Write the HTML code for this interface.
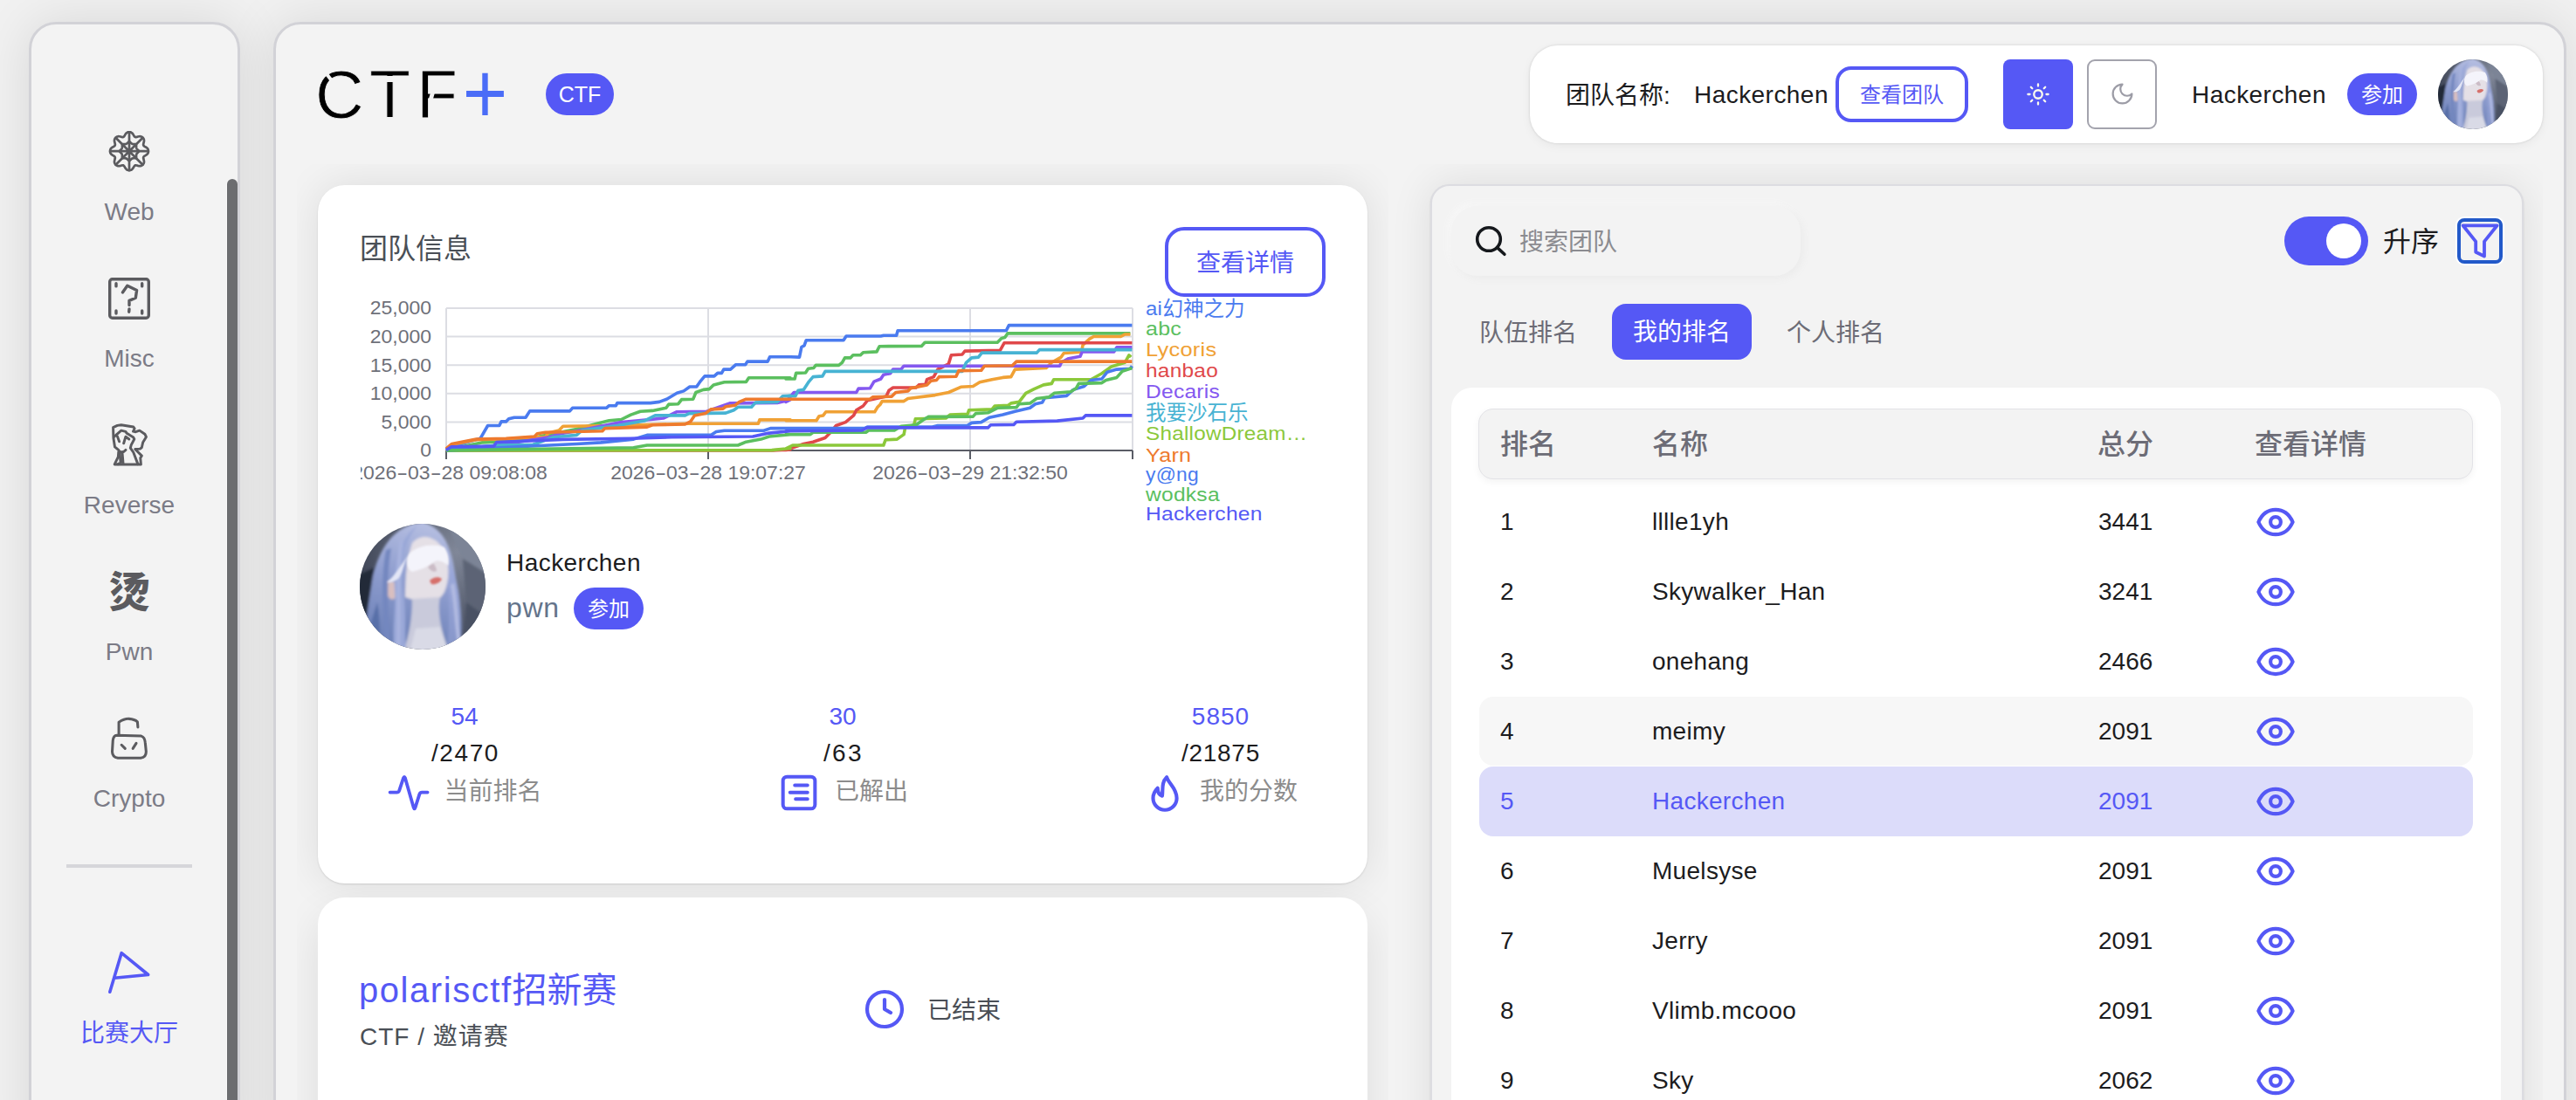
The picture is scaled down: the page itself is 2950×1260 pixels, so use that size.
<!DOCTYPE html>
<html lang="zh-CN">
<head>
<meta charset="utf-8">
<title>CTF+</title>
<style>
*{box-sizing:border-box;margin:0;padding:0}
html{background:#f1f1f1}
body{width:2950px;height:1260px;background:#f1f1f1}
#root{position:relative;width:2950px;height:1260px;overflow:hidden;background:#f1f1f1}
body{position:relative;font-family:"Liberation Sans","Noto Sans CJK SC",sans-serif;color:#1c1c1e;font-size:28px;line-height:1}
.abs{position:absolute}
.t{position:absolute;white-space:nowrap;line-height:1}
.c{transform:translateX(-50%)}
.pri{color:#5558f5}
svg{position:absolute;overflow:visible}
#side{position:absolute;left:33px;top:25px;width:242px;height:1300px;background:#f3f3f3;border:3px solid #d2d2d7;border-radius:31px}
.psh{position:absolute;border-radius:31px;box-shadow:0 0 60px rgba(0,0,0,.105)}
#sbar{position:absolute;left:260px;top:205px;width:12px;height:1100px;background:#6c6d70;border-radius:6px 6px 0 0;box-shadow:-1px 0 0 #fafafa}
.slab{position:absolute;left:34px;width:228px;text-align:center;font-size:28px;color:#7b7b86;line-height:32px;margin-top:1px}
#main{position:absolute;left:313px;top:25px;width:2626px;height:1300px;background:#f3f3f3;border:3px solid #d2d2d7;border-radius:31px}
.clipc{position:absolute;top:188px;height:1072px;overflow:hidden}
.clipc>div{position:absolute;top:-188px;width:2950px;height:1260px}
.card{position:absolute;background:#fff;border-radius:31px;box-shadow:0 1px 2px rgba(0,0,0,.12),0 0 48px rgba(0,0,0,.095)}
.pill{position:absolute;background:#5558f5;color:#fff;border-radius:24px;text-align:center;font-size:24px;line-height:50px;height:48px;width:80px}
.sico{stroke:#5b5b5f;fill:none;stroke-linecap:round;stroke-linejoin:round}
</style>
</head>
<body>
<div id="root">
<svg width="0" height="0" style="left:0;top:0"><defs>
<radialGradient id="avbg" cx="0.78" cy="0.22" r="1.050"><stop offset="0" stop-color="#818899"/><stop offset="0.45" stop-color="#5a6172"/><stop offset="1" stop-color="#2b3142"/></radialGradient>
<linearGradient id="avhair" x1="0.5" y1="0" x2="0.3" y2="1"><stop offset="0" stop-color="#b4bde1"/><stop offset="0.45" stop-color="#8c9bcd"/><stop offset="1" stop-color="#657bb2"/></linearGradient>
<linearGradient id="avhair2" x1="0" y1="0" x2="0" y2="1"><stop offset="0" stop-color="#9daadb"/><stop offset="1" stop-color="#8494c8"/></linearGradient>
<filter id="avb" x="-20%" y="-20%" width="140%" height="140%"><feGaussianBlur stdDeviation="1.800"/></filter>
<filter id="avb2" x="-20%" y="-20%" width="140%" height="140%"><feGaussianBlur stdDeviation="0.900"/></filter>
<clipPath id="avc"><circle cx="72" cy="72" r="72"/></clipPath>
</defs></svg>
<!-- SIDEBAR -->
<div class="psh" style="left:33px;top:25px;width:242px;height:1300px"></div>
<div class="psh" style="left:313px;top:25px;width:2625px;height:1300px"></div>
<div id="side"></div>
<div id="sbar"></div>
<!-- web icon -->
<svg class="sico" style="left:124px;top:149px" width="48" height="48" viewBox="0 0 48 48" stroke-width="2.700">
<g transform="translate(24,24.200)">
<path d="M0.00,-21.90L1.07,-21.84L2.12,-21.55L3.11,-20.93L3.98,-19.99L4.72,-18.85L5.37,-17.71L6.01,-16.80L6.74,-16.26L7.63,-16.13L8.73,-16.32L9.99,-16.66L11.32,-16.95L12.61,-17.00L13.74,-16.74L14.69,-16.20L15.49,-15.49L16.20,-14.69L16.74,-13.74L17.00,-12.61L16.95,-11.32L16.66,-9.99L16.32,-8.73L16.13,-7.63L16.26,-6.74L16.80,-6.01L17.71,-5.37L18.85,-4.72L19.99,-3.98L20.93,-3.11L21.55,-2.12L21.84,-1.07L21.90,-0.00L21.84,1.07L21.55,2.12L20.93,3.11L19.99,3.98L18.85,4.72L17.71,5.37L16.80,6.01L16.26,6.74L16.13,7.63L16.32,8.73L16.66,9.99L16.95,11.32L17.00,12.61L16.74,13.74L16.20,14.69L15.49,15.49L14.69,16.20L13.74,16.74L12.61,17.00L11.32,16.95L9.99,16.66L8.73,16.32L7.63,16.13L6.74,16.26L6.01,16.80L5.37,17.71L4.72,18.85L3.98,19.99L3.11,20.93L2.12,21.55L1.07,21.84L0.00,21.90L-1.07,21.84L-2.12,21.55L-3.11,20.93L-3.98,19.99L-4.72,18.85L-5.37,17.71L-6.01,16.80L-6.74,16.26L-7.63,16.13L-8.73,16.32L-9.99,16.66L-11.32,16.95L-12.61,17.00L-13.74,16.74L-14.69,16.20L-15.49,15.49L-16.20,14.69L-16.74,13.74L-17.00,12.61L-16.95,11.32L-16.66,9.99L-16.32,8.73L-16.13,7.63L-16.26,6.74L-16.80,6.01L-17.71,5.37L-18.85,4.72L-19.99,3.98L-20.93,3.11L-21.55,2.12L-21.84,1.07L-21.90,0.00L-21.84,-1.07L-21.55,-2.12L-20.93,-3.11L-19.99,-3.98L-18.85,-4.72L-17.71,-5.37L-16.80,-6.01L-16.26,-6.74L-16.13,-7.63L-16.32,-8.73L-16.66,-9.99L-16.95,-11.32L-17.00,-12.61L-16.74,-13.74L-16.20,-14.69L-15.49,-15.49L-14.69,-16.20L-13.74,-16.74L-12.61,-17.00L-11.32,-16.95L-9.99,-16.66L-8.73,-16.32L-7.63,-16.13L-6.74,-16.26L-6.01,-16.80L-5.37,-17.71L-4.72,-18.85L-3.98,-19.99L-3.11,-20.93L-2.12,-21.55L-1.07,-21.84Z"/>
<path d="M0.00,-21.90L-0.00,21.90M15.49,-15.49L-15.49,15.49M21.90,-0.00L-21.90,0.00M15.49,15.49L-15.49,-15.49"/>
<path d="M0.00,-11.20L0.53,-10.82L1.02,-10.38L1.47,-9.94L1.89,-9.51L2.29,-9.12L2.67,-8.79L3.05,-8.52L3.44,-8.31L3.87,-8.18L4.33,-8.10L4.83,-8.07L5.39,-8.06L5.99,-8.07L6.62,-8.07L7.28,-8.03L7.92,-7.92L8.03,-7.28L8.07,-6.62L8.07,-5.99L8.06,-5.39L8.07,-4.83L8.10,-4.33L8.18,-3.87L8.31,-3.44L8.52,-3.05L8.79,-2.67L9.12,-2.29L9.51,-1.89L9.94,-1.47L10.38,-1.02L10.82,-0.53L11.20,-0.00L10.82,0.53L10.38,1.02L9.94,1.47L9.51,1.89L9.12,2.29L8.79,2.67L8.52,3.05L8.31,3.44L8.18,3.87L8.10,4.33L8.07,4.83L8.06,5.39L8.07,5.99L8.07,6.62L8.03,7.28L7.92,7.92L7.28,8.03L6.62,8.07L5.99,8.07L5.39,8.06L4.83,8.07L4.33,8.10L3.87,8.18L3.44,8.31L3.05,8.52L2.67,8.79L2.29,9.12L1.89,9.51L1.47,9.94L1.02,10.38L0.53,10.82L0.00,11.20L-0.53,10.82L-1.02,10.38L-1.47,9.94L-1.89,9.51L-2.29,9.12L-2.67,8.79L-3.05,8.52L-3.44,8.31L-3.87,8.18L-4.33,8.10L-4.83,8.07L-5.39,8.06L-5.99,8.07L-6.62,8.07L-7.28,8.03L-7.92,7.92L-8.03,7.28L-8.07,6.62L-8.07,5.99L-8.06,5.39L-8.07,4.83L-8.10,4.33L-8.18,3.87L-8.31,3.44L-8.52,3.05L-8.79,2.67L-9.12,2.29L-9.51,1.89L-9.94,1.47L-10.38,1.02L-10.82,0.53L-11.20,0.00L-10.82,-0.53L-10.38,-1.02L-9.94,-1.47L-9.51,-1.89L-9.12,-2.29L-8.79,-2.67L-8.52,-3.05L-8.31,-3.44L-8.18,-3.87L-8.10,-4.33L-8.07,-4.83L-8.06,-5.39L-8.07,-5.99L-8.07,-6.62L-8.03,-7.28L-7.92,-7.92L-7.28,-8.03L-6.62,-8.07L-5.99,-8.07L-5.39,-8.06L-4.83,-8.07L-4.33,-8.10L-3.87,-8.18L-3.44,-8.31L-3.05,-8.52L-2.67,-8.79L-2.29,-9.12L-1.89,-9.51L-1.47,-9.94L-1.02,-10.38L-0.53,-10.82Z"/>
</g></svg>
<div class="slab" style="top:226px">Web</div>
<!-- misc icon -->
<svg class="sico" style="left:124px;top:318px" width="48" height="48" viewBox="0 0 48 48" stroke-width="3.4">
<rect x="1.7" y="1.700" width="44.6" height="44.6" rx="3"/>
<path d="M16.4,16.9L21.8,9.200L32.6,14.6L31.3,23.2L24,26.4V31.5M24,36L23.700,39.200M9,6.700V9.900M38.700,6.700V9.900M9,37.900V41M38.700,37.900V41"/>
</svg>
<div class="slab" style="top:394px">Misc</div>
<!-- reverse icon -->
<svg class="sico" style="left:107px;top:475px" width="80" height="70" viewBox="0 0 1257 1100" stroke-width="46">
<path d="M360,420L355,230L430,195L500,185L720,220L740,250L715,300L760,310L830,285L925,350L950,400L890,500L870,590L840,615L750,620L870,740L845,780L855,895L380,895L445,760L455,640L385,580Z"/>
<path d="M370,400L500,285L580,305L600,335L720,410L735,440L680,545L665,600L720,680L800,890"/>
<path d="M430,390L465,485M545,515L580,395L640,440M580,635C540,680 500,680 470,660M520,700L535,880M470,690L490,860L440,890"/>
</svg>
<div class="slab" style="top:562px">Reverse</div>
<!-- pwn icon -->
<div class="t" style="left:124px;top:655px;width:48px;text-align:center;font-size:48px;font-weight:900;color:#5b5b5f;font-family:'Liberation Sans','Noto Sans CJK SC',sans-serif">烫</div>
<div class="slab" style="top:730px">Pwn</div>
<!-- crypto icon -->
<svg class="sico" style="left:107px;top:810px" width="80" height="70" viewBox="0 0 1257 1100" stroke-width="48">
<path d="M420,507L860,520Q925,540 932,640L948,800Q950,900 850,915L440,915Q340,900 338,800L350,600Q360,512 420,507Z"/>
<path d="M457,495V270Q560,205 640,210Q740,215 792,265L800,360"/>
<path d="M505,680L570,745M770,650L710,745"/>
</svg>
<div class="slab" style="top:898px">Crypto</div>
<div class="abs" style="left:76px;top:990px;width:144px;height:4px;background:#d6d6da"></div>
<!-- flag -->
<svg style="left:87px;top:1070px" width="120" height="140" viewBox="0 0 120 140" fill="none" stroke="#5558f5" stroke-width="3.6" stroke-linecap="round" stroke-linejoin="round">
<path d="M38.800,66.200L52.200,21.600L82.700,46.500L43.900,50.300"/></svg>
<div class="slab" style="top:1167px;color:#5558f5">比赛大厅</div>
<!-- MAIN -->
<div id="main"></div>
<!-- logo -->
<div class="t" id="logoC" style="left:361px;top:70px;font-size:77px;color:#000;-webkit-text-stroke:.8px #f3f3f3">C</div>
<div class="t" id="logoT" style="left:423px;top:70px;font-size:77px;color:#000;-webkit-text-stroke:.8px #f3f3f3">T</div>
<div class="t" id="logoF" style="left:477px;top:70px;font-size:77px;color:#000;-webkit-text-stroke:.8px #f3f3f3">F</div>
<div class="t" id="logoP" style="left:531px;top:65px;font-size:84px;color:#4a6cf7;transform:scale(1.05,1.17);transform-origin:50% 50%">+</div>
<div class="abs" style="left:441px;top:87.300px;width:11px;height:7.200px;background:#f3f3f3"></div>
<div class="abs" style="left:492.400px;top:106.300px;width:5px;height:7.200px;background:#f3f3f3;transform:skewX(-16deg)"></div>
<div class="abs" style="left:368.500px;top:86px;width:15px;height:4px;background:#f3f3f3;transform:rotate(52deg)"></div>
<div class="pill" style="left:625px;top:84px;width:78px;height:48px;line-height:48px;font-size:25px">CTF</div>
<!-- header pill -->
<div class="abs" style="left:1752px;top:52px;width:1160px;height:112px;background:#fff;border-radius:32px;box-shadow:0 0 3px rgba(0,0,0,.14),0 3px 12px rgba(0,0,0,.05)"></div>
<div class="t" style="left:1793px;top:96px;font-size:28px;color:#1c1c1e">团队名称:</div>
<div class="t" style="left:1940px;top:95px;font-size:28px;color:#1c1c1e;letter-spacing:.45px">Hackerchen</div>
<div class="abs" style="left:2102px;top:76px;width:152px;height:64px;border:4px solid #5558f5;border-radius:18px;color:#5558f5;font-size:24px;line-height:58px;text-align:center">查看团队</div>
<div class="abs" style="left:2294px;top:68px;width:80px;height:80px;background:#5558f5;border-radius:8px"></div>
<svg style="left:2318px;top:92px" width="32" height="32" viewBox="-16 -16 32 32" fill="none" stroke="#fdfcee" stroke-width="2.300" stroke-linecap="round"><circle cx="0" cy="0" r="4.750"/><path d="M9.50,0.00L11.60,0.00M6.72,6.72L8.20,8.20M0.00,9.50L0.00,11.60M-6.72,6.72L-8.20,8.20M-9.50,0.00L-11.60,0.00M-6.72,-6.72L-8.20,-8.20M-0.00,-9.50L-0.00,-11.60M6.72,-6.72L8.20,-8.20"/></svg>
<div class="abs" style="left:2390px;top:68px;width:80px;height:80px;background:#fff;border:2px solid #a3a3ad;border-radius:9px"></div>
<svg style="left:2415.500px;top:93.300px" width="29" height="29" viewBox="0 0 24 24" fill="none" stroke="#9c9ca6" stroke-width="1.850" stroke-linecap="round" stroke-linejoin="round"><path d="M12 3a6 6 0 0 0 9 9 9 9 0 1 1-9-9Z"/></svg>
<div class="t" style="left:2510px;top:95px;font-size:28px;color:#1c1c1e;letter-spacing:.45px">Hackerchen</div>
<div class="pill" style="left:2688px;top:84px">参加</div>
<svg style="left:2792px;top:68px" width="80" height="80" viewBox="0 0 144 144">
<g clip-path="url(#avc)">
<rect width="144" height="144" fill="url(#avbg)"/>
<g filter="url(#avb)">
<path d="M100,0 L150,0 L150,60 L118,40Z" fill="#7c8496"/>
<path d="M118,40 L150,60 L150,110 L122,90Z" fill="#5c6374"/>
<path d="M122,90 L150,110 L150,150 L118,150Z" fill="#4a5163"/>
<path d="M-5,60 L22,48 L30,150 L-5,150Z" fill="#232939"/>
<path d="M72,-2 C40,0 20,30 14,66 C10,96 2,124 12,152 L112,152 C122,122 114,84 110,62 C106,34 100,6 72,-2Z" fill="url(#avhair)"/>
<path d="M102,44 C112,62 118,92 114,116 C112,130 120,140 128,150 L100,150 C102,120 104,80 98,50Z" fill="url(#avhair2)"/>
<path d="M60,22 C72,8 92,16 99,36 C103,52 102,66 97,78 C92,88 80,93 70,90 L52,84 C52,60 54,40 60,22Z" fill="#e5e0e6"/>
<path d="M60,86 L92,84 C88,102 94,126 104,152 L48,152 C58,126 60,104 60,86Z" fill="#c9cadb"/>
<path d="M64,120 L92,118 L104,152 L56,152Z" fill="#d9dae6"/>
<path d="M29,68 C35,62 43,66 43,76 C43,84 40,88 35,86 C30,82 27,74 29,68Z" fill="#d9bfc0"/>
<path d="M66,2 C50,20 46,50 50,80 C54,104 50,128 54,152 L40,152 C36,120 42,100 40,76 C38,46 46,16 66,2Z" fill="#9aa8d8"/>
<path d="M20,90 C24,110 22,130 26,152 L10,152 C6,130 14,110 20,90Z" fill="#5870a8"/>
<path d="M30,30 C24,60 26,100 30,150 L36,150 C32,100 30,60 36,28Z" fill="#7387bf"/>
<path d="M46,20 C40,50 44,90 42,150 L46,150 C48,90 44,50 50,18Z" fill="#a9b4df"/>
<path d="M104,70 C110,100 108,130 116,150 L120,150 C112,130 114,100 108,68Z" fill="#b3bce2"/>
</g>
<g filter="url(#avb2)">
<path d="M57,34 C66,25 84,22 97,27 C101,33 103,41 101,48 C96,43 90,41 86,43 C80,48 72,52 60,55 C54,52 52,42 57,34Z" fill="#f4f4fb"/>
<path d="M57,34 C51,42 50,54 45,62 C41,66 36,68 31,67 C40,60 47,47 57,34Z" fill="#e3e6f6"/>
<path d="M80,65 C84,61 90,60 94,63 C92,68 86,70 82,69Z" fill="#d66f6a"/>
<path d="M78,49 C80,53 84,56 88,54 C88,51 86,47 84,45Z" fill="#cbbcc6"/>
</g>
</svg>
<!-- CONTENT -->
<div class="clipc" style="left:340px;width:1250px"><div style="left:-340px">
<div class="card" style="left:364px;top:212px;width:1202px;height:800px"></div>
<div class="abs" style="left:364px;top:1048px;width:1202px;height:400px;border-radius:31px;box-shadow:0 0 48px rgba(0,0,0,.095)"></div>
<div class="abs" style="left:364px;top:1028px;width:1202px;height:400px;border-radius:31px;background:#fff"></div>
</div></div>
<div class="clipc" style="left:1590px;width:1322px"><div style="left:-1590px">
<div class="card" id="rpanel" style="left:1638px;top:211px;width:1251.500px;height:1200px;background:#f3f3f3;border:2px solid #dcdce1;border-radius:22px"></div>
</div></div>
<div class="t" style="left:412px;top:269px;font-size:32px;color:#4a4f56">团队信息</div>
<div class="abs" style="left:1334px;top:260px;width:184px;height:80px;border:4px solid #5558f5;border-radius:22px;color:#5558f5;font-size:28px;line-height:76px;text-align:center">查看详情</div>
<svg id="chart" style="left:0;top:0" width="2950" height="1260" viewBox="0 0 2950 1260" font-family="Liberation Sans, Noto Sans CJK SC, sans-serif">
<path d="M511,353.0H1297M511,385.6H1297M511,418.2H1297M511,450.8H1297M511,483.4H1297M511,353V516M811,353V516M1111,353V516M1297,353V516" stroke="#dcdde3" stroke-width="2" fill="none"/>
<path d="M511,516H1297M511,516v10M811,516v10M1111,516v10M1297,516v10" stroke="#5a5d66" stroke-width="2" fill="none"/>
<text transform="translate(494,360.3) scale(1,.93)" text-anchor="end" font-size="23" fill="#6e7079">25,000</text>
<text transform="translate(494,392.9) scale(1,.93)" text-anchor="end" font-size="23" fill="#6e7079">20,000</text>
<text transform="translate(494,425.5) scale(1,.93)" text-anchor="end" font-size="23" fill="#6e7079">15,000</text>
<text transform="translate(494,458.1) scale(1,.93)" text-anchor="end" font-size="23" fill="#6e7079">10,000</text>
<text transform="translate(494,490.7) scale(1,.93)" text-anchor="end" font-size="23" fill="#6e7079">5,000</text>
<text transform="translate(494,523.3) scale(1,.93)" text-anchor="end" font-size="23" fill="#6e7079">0</text>
<clipPath id="xc"><rect x="413" y="520" width="1000" height="40"/></clipPath>
<g clip-path="url(#xc)" font-size="23" fill="#6e7079" text-anchor="middle">
<text transform="translate(515,549.3) scale(1,.93)">2026<tspan textLength="12.800" lengthAdjust="spacingAndGlyphs">-</tspan>03<tspan textLength="12.800" lengthAdjust="spacingAndGlyphs">-</tspan>28 09:08:08</text>
<text transform="translate(811,549.3) scale(1,.93)">2026<tspan textLength="12.800" lengthAdjust="spacingAndGlyphs">-</tspan>03<tspan textLength="12.800" lengthAdjust="spacingAndGlyphs">-</tspan>28 19:07:27</text>
<text transform="translate(1111,549.3) scale(1,.93)">2026<tspan textLength="12.800" lengthAdjust="spacingAndGlyphs">-</tspan>03<tspan textLength="12.800" lengthAdjust="spacingAndGlyphs">-</tspan>29 21:32:50</text>
</g>
<clipPath id="pc"><rect x="509" y="340" width="792" height="178"/></clipPath>
<g clip-path="url(#pc)" fill="none" stroke-width="3.600" stroke-linejoin="round" stroke-linecap="butt">
<path d="M510.9,515.5L528.3,508.5L550.0,502.3L558.6,487.5L571.8,487.5L574.1,482.9L579.5,482.9L582.6,479.8L588.9,478.2L602.0,478.2L606.7,470.9L652.5,470.9L655.6,467.3L694.4,467.3L697.5,464.7L705.3,464.7L706.9,461.6L744.9,461.6L755.0,460.4L763.5,457.2L775.2,450.3L783.0,447.9L789.9,443.0L797.7,443.0L802.4,436.3L807.0,430.9L817.9,430.9L821.8,427.4L826.4,427.4L828.8,423.1L836.5,423.1L842.7,417.7L853.6,417.7L855.9,414.1L879.2,414.1L881.6,408.8L905.0,408.8L915.5,409.1L917.9,397.5L921.0,395.9L923.3,389.7L966.0,389.7L969.1,385.0L1008.7,385.0L1011.8,384.3L1026.6,384.3L1028.1,378.8L1152.3,378.8L1155.4,372.6L1296.4,372.6" stroke="#4a7bef"/>
<path d="M510.9,515.5L551.6,506.9L567.1,506.2L613.7,500.7L660.3,491.4L683.6,485.2L697.5,481.8L711.5,480.5L722.4,475.1L733.3,471.2L747.2,470.4L762.8,467.3L765.9,463.1L776.7,462.7L780.6,457.6L793.8,457.2L796.9,449.5L805.5,446.4L812.5,445.6L817.1,440.9L829.5,437.8L854.4,437.4L857.5,432.7L905.0,432.7L900.0,434.0L910.1,434.0L911.6,427.4L922.5,427.0L925.6,422.3L931.8,421.5L934.2,418.4L960.6,418.4L964.4,415.3L967.5,409.9L973.8,409.9L976.9,406.8L985.4,406.8L988.5,403.7L1004.0,402.9L1007.1,396.7L1055.3,396.4L1059.2,392.3L1142.2,392.3L1146.9,387.4L1150.8,386.6L1153.9,381.9L1294.4,381.9" stroke="#5bbf5f"/>
<path d="M510.9,514.7L517.4,509.3L545.4,503.8L579.5,502.7L613.7,500.7L624.6,500.7L627.7,496.1L640.1,493.0L644.8,488.3L706.9,487.5L789.2,485.2L868.4,485.2L869.9,480.9L905.0,480.9L900.0,481.8L934.9,481.8L938.0,476.7L942.7,475.9L945.8,471.7L1001.7,471.7L1004.8,466.6L1007.9,463.5L1010.2,459.6L1035.1,459.6L1039.8,456.5L1070.8,452.6L1086.3,449.5L1100.3,443.3L1114.3,442.5L1122.0,437.8L1136.0,434.7L1148.4,432.4L1157.8,431.6L1162.4,423.1L1198.1,421.5L1204.3,415.3L1215.2,409.1L1218.3,404.5L1238.5,403.2L1240.1,395.1L1247.8,388.1L1252.5,385.5L1283.5,385.5L1288.2,383.0L1294.4,383.0" stroke="#f0a135"/>
<path d="M510.9,515.9L885.4,515.9L905.0,515.0L900.0,515.5L920.2,508.5L931.1,506.2L945.0,501.5L949.7,496.8L957.5,487.5L968.3,483.6L977.6,475.9L980.7,469.7L988.5,465.0L993.2,458.8L1014.9,454.1L1018.0,447.2L1022.7,444.0L1049.1,444.0L1052.2,440.9L1059.9,440.2L1061.5,434.7L1069.3,431.6L1073.9,423.1L1086.3,416.9L1089.4,406.8L1101.9,406.0L1105.0,402.1L1145.3,401.3L1150.0,392.8L1296.4,392.8" stroke="#e0484a"/>
<path d="M510.9,515.5L570.2,510.0L629.2,500.7L644.8,496.1L660.3,493.7L711.5,483.6L728.6,482.1L759.7,479.0L775.2,471.7L809.3,471.2L835.7,461.9L890.1,461.4L905.0,458.0L900.0,460.4L909.3,449.5L980.7,449.5L983.1,445.1L996.3,444.8L1000.9,437.1L1008.7,434.0L1011.8,429.3L1019.6,427.7L1022.7,423.1L1032.0,422.8L1035.1,419.2L1213.7,419.2L1215.2,415.3L1223.8,410.7L1237.0,408.3L1239.3,402.9L1275.8,402.9L1278.9,397.9L1296.4,397.9" stroke="#8458f0"/>
<path d="M510.9,515.5L570.2,510.0L610.6,509.3L633.9,500.7L660.3,498.4L666.5,493.0L689.8,489.9L706.9,487.5L737.9,482.1L750.3,475.9L784.5,475.9L789.2,473.6L831.1,473.1L840.4,469.7L845.1,466.3L860.6,466.3L865.2,461.1L890.1,460.4L896.3,453.8L905.0,453.4L900.0,453.8L910.9,453.8L914.0,447.2L920.2,446.4L926.4,437.1L931.1,431.6L941.9,430.9L945.0,425.4L1101.9,425.4L1106.5,415.3L1112.7,409.9L1120.5,409.1L1124.4,404.1L1187.3,404.1L1190.4,400.6L1296.4,400.6" stroke="#47b3d3"/>
<path d="M510.9,515.9L883.9,515.6L905.0,513.5L900.0,513.9L907.8,510.0L1011.8,510.0L1014.1,503.8L1027.3,503.1L1035.1,497.6L1036.6,489.9L1046.7,486.8L1048.3,479.8L1083.2,479.0L1087.9,475.1L1108.1,474.3L1109.6,469.7L1136.0,468.9L1139.1,465.0L1154.7,464.2L1157.8,461.9L1167.1,460.4L1174.8,450.3L1184.2,445.6L1195.0,440.9L1204.3,439.4L1206.7,434.7L1249.4,434.7L1261.8,427.7L1272.7,420.0L1288.2,415.3L1292.9,406.8L1295.2,409.1" stroke="#8bc83a"/>
<path d="M510.9,513.9L517.4,508.5L545.4,503.1L579.5,502.3L612.1,500.0L615.2,496.8L624.6,495.3L689.8,493.7L692.9,490.6L741.0,489.1L747.2,486.8L784.5,486.0L790.7,482.9L795.4,475.9L807.8,473.6L814.0,468.9L828.0,468.1L831.1,465.8L842.0,464.2L846.6,460.4L854.4,457.2L905.0,457.2L900.0,457.2L996.3,457.2L999.4,454.9L1021.1,454.1L1025.8,449.5L1039.8,447.9L1042.9,444.8L1061.5,440.9L1066.1,436.3L1072.4,435.5L1075.5,431.6L1094.9,431.3L1098.0,424.6L1123.6,424.3L1127.5,419.2L1159.3,418.7L1164.0,414.1L1296.4,414.1" stroke="#ee7a2e"/>
<path d="M510.9,515.9L613.7,510.8L660.3,508.5L688.2,506.9L725.5,503.1L741.0,498.4L814.0,498.4L820.2,494.5L829.5,493.3L874.6,493.3L882.3,490.6L905.0,490.6L900.0,490.6L990.1,490.6L993.2,489.1L1067.7,489.1L1073.9,487.5L1108.1,487.2L1112.7,484.4L1123.6,483.6L1132.9,478.2L1148.4,475.1L1162.4,471.2L1179.5,467.3L1185.7,462.7L1193.5,461.1L1196.6,455.7L1221.4,453.4L1229.2,446.4L1241.6,442.5L1249.4,435.5L1261.8,434.0L1268.0,426.2L1278.9,423.1L1294.4,422.3L1296.4,419.2" stroke="#4a7bef"/>
<path d="M510.9,515.9L725.5,512.8L741.0,510.0L845.1,510.0L854.4,506.2L871.5,503.1L880.8,500.0L905.0,497.6L900.0,497.6L928.0,497.6L931.1,495.3L991.6,495.3L994.7,493.0L1024.2,493.0L1032.0,488.3L1049.1,486.8L1056.8,481.3L1063.0,477.4L1114.3,477.1L1117.4,473.6L1131.4,472.8L1142.2,467.3L1164.0,466.6L1167.1,462.7L1179.5,461.9L1187.3,456.5L1201.2,454.9L1207.5,450.3L1226.1,448.7L1232.3,444.8L1235.4,439.4L1261.8,438.6L1266.5,435.5L1278.9,432.4L1285.1,425.4L1296.4,421.5" stroke="#5bbf5f"/>
<path d="M510.9,515.5L516.6,511.9L565.6,511.1L568.7,506.5L644.8,503.4L722.4,502.3L769.0,500.7L862.1,500.0L880.8,496.1L905.0,493.7L900.0,493.7L987.0,493.0L993.2,489.9L1131.4,489.9L1134.5,486.8L1160.9,486.4L1164.0,483.3L1210.6,482.1L1240.1,479.0L1243.2,475.9L1296.4,475.9" stroke="#5558f5"/>
</g>
<text transform="translate(1312,360.5) scale(1,.9)" font-size="24" fill="#4a7bef" letter-spacing=".25">ai</text>
<text x="1331.5" y="362.0" font-size="23.5" fill="#4a7bef">幻神之力</text>
<text transform="translate(1312,384.2) scale(1.042,.9)" font-size="24" fill="#5bbf5f" letter-spacing=".25">abc</text>
<text transform="translate(1312,407.8) scale(1.059,.9)" font-size="24" fill="#f0a135" letter-spacing=".25">Lycoris</text>
<text transform="translate(1312,431.8) scale(1.018,.9)" font-size="24" fill="#e0484a" letter-spacing=".25">hanbao</text>
<text transform="translate(1312,456.0) scale(1.024,.9)" font-size="24" fill="#8458f0" letter-spacing=".25">Decaris</text>
<text x="1312" y="481.2" font-size="23.5" fill="#47b3d3">我要沙石乐</text>
<text transform="translate(1312,504.3) scale(1.011,.9)" font-size="24" fill="#8bc83a" letter-spacing=".25">ShallowDream…</text>
<text transform="translate(1312,528.5) scale(1.049,.9)" font-size="24" fill="#ee7a2e" letter-spacing=".25">Yarn</text>
<text transform="translate(1312,551.4) scale(0.950,.9)" font-size="24" fill="#4a7bef" letter-spacing=".25">y@ng</text>
<text transform="translate(1312,573.8) scale(1.024,.9)" font-size="24" fill="#5bbf5f" letter-spacing=".25">wodksa</text>
<text transform="translate(1312,596.2) scale(1.024,.9)" font-size="24" fill="#5558f5" letter-spacing=".25">Hackerchen</text>
</svg>
<svg style="left:412px;top:600px" width="144" height="144" viewBox="0 0 144 144">
<g clip-path="url(#avc)">
<rect width="144" height="144" fill="url(#avbg)"/>
<g filter="url(#avb)">
<path d="M100,0 L150,0 L150,60 L118,40Z" fill="#7c8496"/>
<path d="M118,40 L150,60 L150,110 L122,90Z" fill="#5c6374"/>
<path d="M122,90 L150,110 L150,150 L118,150Z" fill="#4a5163"/>
<path d="M-5,60 L22,48 L30,150 L-5,150Z" fill="#232939"/>
<path d="M72,-2 C40,0 20,30 14,66 C10,96 2,124 12,152 L112,152 C122,122 114,84 110,62 C106,34 100,6 72,-2Z" fill="url(#avhair)"/>
<path d="M102,44 C112,62 118,92 114,116 C112,130 120,140 128,150 L100,150 C102,120 104,80 98,50Z" fill="url(#avhair2)"/>
<path d="M60,22 C72,8 92,16 99,36 C103,52 102,66 97,78 C92,88 80,93 70,90 L52,84 C52,60 54,40 60,22Z" fill="#e5e0e6"/>
<path d="M60,86 L92,84 C88,102 94,126 104,152 L48,152 C58,126 60,104 60,86Z" fill="#c9cadb"/>
<path d="M64,120 L92,118 L104,152 L56,152Z" fill="#d9dae6"/>
<path d="M29,68 C35,62 43,66 43,76 C43,84 40,88 35,86 C30,82 27,74 29,68Z" fill="#d9bfc0"/>
<path d="M66,2 C50,20 46,50 50,80 C54,104 50,128 54,152 L40,152 C36,120 42,100 40,76 C38,46 46,16 66,2Z" fill="#9aa8d8"/>
<path d="M20,90 C24,110 22,130 26,152 L10,152 C6,130 14,110 20,90Z" fill="#5870a8"/>
<path d="M30,30 C24,60 26,100 30,150 L36,150 C32,100 30,60 36,28Z" fill="#7387bf"/>
<path d="M46,20 C40,50 44,90 42,150 L46,150 C48,90 44,50 50,18Z" fill="#a9b4df"/>
<path d="M104,70 C110,100 108,130 116,150 L120,150 C112,130 114,100 108,68Z" fill="#b3bce2"/>
</g>
<g filter="url(#avb2)">
<path d="M57,34 C66,25 84,22 97,27 C101,33 103,41 101,48 C96,43 90,41 86,43 C80,48 72,52 60,55 C54,52 52,42 57,34Z" fill="#f4f4fb"/>
<path d="M57,34 C51,42 50,54 45,62 C41,66 36,68 31,67 C40,60 47,47 57,34Z" fill="#e3e6f6"/>
<path d="M80,65 C84,61 90,60 94,63 C92,68 86,70 82,69Z" fill="#d66f6a"/>
<path d="M78,49 C80,53 84,56 88,54 C88,51 86,47 84,45Z" fill="#cbbcc6"/>
</g>
</svg>
<div class="t" style="left:580px;top:631px;font-size:28px;color:#1c1c1e;letter-spacing:.45px">Hackerchen</div>
<div class="t" style="left:580px;top:680px;font-size:32px;color:#64748b;letter-spacing:.7px">pwn</div>
<div class="pill" style="left:657px;top:673px">参加</div>
<!-- stats -->
<div class="t c pri" style="left:532px;top:807px;font-size:28px">54</div>
<div class="t c" style="left:533px;top:849px;font-size:28px;letter-spacing:1.6px">/2470</div>
<div class="t c pri" style="left:965px;top:807px;font-size:28px">30</div>
<div class="t c" style="left:966px;top:849px;font-size:28px;letter-spacing:2.4px">/63</div>
<div class="t c pri" style="left:1398px;top:807px;font-size:28px;letter-spacing:1px">5850</div>
<div class="t c" style="left:1398px;top:849px;font-size:28px;letter-spacing:.7px">/21875</div>
<svg style="left:444px;top:884px" width="48" height="48" viewBox="0 0 24 24" fill="none" stroke="#5558f5" stroke-width="1.900" stroke-linecap="round" stroke-linejoin="round"><path d="M1.300 11.800H5.200Q6.200 11.800 6.600 10.800L9 3.600Q9.500 2.200 10 3.600L14.800 20.400Q15.300 21.900 15.800 20.400L18.200 12.800Q18.600 11.800 19.600 11.800H22.800"/></svg>
<div class="t" style="left:508.500px;top:893px;font-size:28px;color:#8c8c8c">当前排名</div>
<svg style="left:893px;top:886px" width="44" height="44" viewBox="0 0 24 24" fill="none" stroke="#5558f5" stroke-width="2.200" stroke-linecap="round" stroke-linejoin="round"><rect x="2" y="2" width="20" height="20" rx="2.500"/><path d="M9.400 7.400H17.300M6.400 11.850H17.300M9.900 16H17.300"/></svg>
<div class="t" style="left:956px;top:893px;font-size:28px;color:#8c8c8c">已解出</div>
<svg style="left:1308px;top:885px" width="50" height="50" viewBox="0 0 24 24" fill="none" stroke="#5558f5" stroke-width="2" stroke-linecap="round" stroke-linejoin="round"><path d="M12.500 2.500c1 3.500 5.500 6 5.500 11.500a6.500 6.500 0 0 1-13 0c0-2.500 1.200-4.200 2.500-5.500 0 2.500 1 3.800 2.500 4.300C10.500 9 9.500 5.500 12.500 2.500z" transform="translate(1,0)"/></svg>
<div class="t" style="left:1374px;top:893px;font-size:28px;color:#8c8c8c">我的分数</div>
<!-- card 2 -->
<div class="t pri" style="left:411px;top:1114px;font-size:40px"><span style="letter-spacing:1.55px">polarisctf</span>招新赛</div>
<div class="t" style="left:412px;top:1174px;font-size:28px;color:#4a4f56;letter-spacing:1px">CTF / 邀请赛</div>
<svg style="left:989px;top:1132px" width="48" height="48" viewBox="0 0 24 24" fill="none" stroke="#5558f5" stroke-width="2.100" stroke-linecap="round" stroke-linejoin="round"><circle cx="12" cy="12" r="10"/><path d="M12 6.500V12l3.500 2"/></svg>
<div class="t" style="left:1062px;top:1144px;font-size:28px;color:#4a4f56">已结束</div>
<!-- RIGHT PANEL -->
<div class="abs" style="left:1662px;top:236px;width:400px;height:80px;border-radius:30px;background:#f3f3f3;box-shadow:3px 3px 8px #ebebeb,-3px -3px 8px #f8f8f8"></div>
<svg style="left:1684.600px;top:253.900px" width="44" height="44" viewBox="-20 -20 44 44" fill="none" stroke="#15181c" stroke-width="3.600" stroke-linecap="round"><circle cx="0" cy="0" r="13.300"/><path d="M9.400 9.400L17.900 17.300"/></svg>
<div class="t" style="left:1740px;top:264px;font-size:28px;color:#8b8b90">搜索团队</div>
<div class="abs" style="left:2616px;top:248px;width:96px;height:56px;border-radius:28px;background:#5558f5"></div>
<div class="abs" style="left:2664px;top:256px;width:40px;height:40px;border-radius:20px;background:#fff"></div>
<div class="t" style="left:2729px;top:261px;font-size:32px;color:#1c1c1e">升序</div>
<div class="abs" style="left:2814px;top:250px;width:52px;height:52px;border:4px solid #2259c9;border-radius:8px;background:#f3f3f3;box-shadow:0 0 0 2px #fff"></div>
<svg style="left:0;top:0" width="2950" height="400" viewBox="0 0 2950 400" fill="none" stroke="#5558f5" stroke-width="3.800" stroke-linejoin="round"><path d="M2820.500 258.300H2859.700L2845 276.600V293.500L2835.200 288.800V276.600Z"/></svg>
<div class="t" style="left:1694px;top:368px;font-size:28px;color:#6c6c76">队伍排名</div>
<div class="abs" style="left:1846px;top:348px;width:160px;height:64px;border-radius:16px;background:#5558f5;color:#fff;font-size:28px;line-height:66px;text-align:center">我的排名</div>
<div class="t" style="left:2046px;top:368px;font-size:28px;color:#6c6c76">个人排名</div>
<div class="abs" style="left:1662px;top:444px;width:1202px;height:900px;border-radius:24px;background:#fff"></div>
<div class="abs" style="left:1693px;top:468px;width:1139px;height:81px;border-radius:17px;background:#f3f3f3;border:1px solid #e3e3e7;box-shadow:0 3px 8px rgba(0,0,0,.05)"></div>
<div class="t" style="left:1718px;top:493px;font-size:32px;font-weight:500;color:#6c6c76">排名</div>
<div class="t" style="left:1892px;top:493px;font-size:32px;font-weight:500;color:#6c6c76">名称</div>
<div class="t" style="left:2402px;top:493px;font-size:32px;font-weight:500;color:#6c6c76">总分</div>
<div class="t" style="left:2582px;top:493px;font-size:32px;font-weight:500;color:#6c6c76">查看详情</div>
<div class="t" style="left:1718px;top:584px;font-size:28px;color:#1c1c1e">1</div>
<div class="t" style="left:1892px;top:584px;font-size:28px;color:#1c1c1e;letter-spacing:.3px">lllle1yh</div>
<div class="t" style="left:2403px;top:584px;font-size:28px;color:#1c1c1e">3441</div>
<svg style="left:2584px;top:576px" width="44" height="44" viewBox="0 0 24 24" fill="none" stroke="#5558f5" stroke-width="2.300" stroke-linecap="round" stroke-linejoin="round"><path d="M1.300 12C3.500 7 7.500 4.300 12 4.300S20.500 7 22.700 12C20.500 17 16.500 19.700 12 19.700S3.500 17 1.300 12z"/><circle cx="12" cy="12" r="3.200"/></svg>
<div class="t" style="left:1718px;top:664px;font-size:28px;color:#1c1c1e">2</div>
<div class="t" style="left:1892px;top:664px;font-size:28px;color:#1c1c1e;letter-spacing:.3px">Skywalker_Han</div>
<div class="t" style="left:2403px;top:664px;font-size:28px;color:#1c1c1e">3241</div>
<svg style="left:2584px;top:656px" width="44" height="44" viewBox="0 0 24 24" fill="none" stroke="#5558f5" stroke-width="2.300" stroke-linecap="round" stroke-linejoin="round"><path d="M1.300 12C3.500 7 7.500 4.300 12 4.300S20.500 7 22.700 12C20.500 17 16.500 19.700 12 19.700S3.500 17 1.300 12z"/><circle cx="12" cy="12" r="3.200"/></svg>
<div class="t" style="left:1718px;top:744px;font-size:28px;color:#1c1c1e">3</div>
<div class="t" style="left:1892px;top:744px;font-size:28px;color:#1c1c1e;letter-spacing:.3px">onehang</div>
<div class="t" style="left:2403px;top:744px;font-size:28px;color:#1c1c1e">2466</div>
<svg style="left:2584px;top:736px" width="44" height="44" viewBox="0 0 24 24" fill="none" stroke="#5558f5" stroke-width="2.300" stroke-linecap="round" stroke-linejoin="round"><path d="M1.300 12C3.500 7 7.500 4.300 12 4.300S20.500 7 22.700 12C20.500 17 16.500 19.700 12 19.700S3.500 17 1.300 12z"/><circle cx="12" cy="12" r="3.200"/></svg>
<div class="abs" style="left:1694px;top:798px;width:1138px;height:79px;border-radius:16px;background:#f7f7f7"></div>
<div class="t" style="left:1718px;top:824px;font-size:28px;color:#1c1c1e">4</div>
<div class="t" style="left:1892px;top:824px;font-size:28px;color:#1c1c1e;letter-spacing:.3px">meimy</div>
<div class="t" style="left:2403px;top:824px;font-size:28px;color:#1c1c1e">2091</div>
<svg style="left:2584px;top:816px" width="44" height="44" viewBox="0 0 24 24" fill="none" stroke="#5558f5" stroke-width="2.300" stroke-linecap="round" stroke-linejoin="round"><path d="M1.300 12C3.500 7 7.500 4.300 12 4.300S20.500 7 22.700 12C20.500 17 16.500 19.700 12 19.700S3.500 17 1.300 12z"/><circle cx="12" cy="12" r="3.200"/></svg>
<div class="abs" style="left:1694px;top:878px;width:1138px;height:80px;border-radius:16px;background:#dcdcfa"></div>
<div class="t" style="left:1718px;top:904px;font-size:28px;color:#5558f5">5</div>
<div class="t" style="left:1892px;top:904px;font-size:28px;color:#5558f5;letter-spacing:.3px">Hackerchen</div>
<div class="t" style="left:2403px;top:904px;font-size:28px;color:#5558f5">2091</div>
<svg style="left:2584px;top:896px" width="44" height="44" viewBox="0 0 24 24" fill="none" stroke="#5558f5" stroke-width="2.300" stroke-linecap="round" stroke-linejoin="round"><path d="M1.300 12C3.500 7 7.500 4.300 12 4.300S20.500 7 22.700 12C20.500 17 16.500 19.700 12 19.700S3.500 17 1.300 12z"/><circle cx="12" cy="12" r="3.200"/></svg>
<div class="t" style="left:1718px;top:984px;font-size:28px;color:#1c1c1e">6</div>
<div class="t" style="left:1892px;top:984px;font-size:28px;color:#1c1c1e;letter-spacing:.3px">Muelsyse</div>
<div class="t" style="left:2403px;top:984px;font-size:28px;color:#1c1c1e">2091</div>
<svg style="left:2584px;top:976px" width="44" height="44" viewBox="0 0 24 24" fill="none" stroke="#5558f5" stroke-width="2.300" stroke-linecap="round" stroke-linejoin="round"><path d="M1.300 12C3.500 7 7.500 4.300 12 4.300S20.500 7 22.700 12C20.500 17 16.500 19.700 12 19.700S3.500 17 1.300 12z"/><circle cx="12" cy="12" r="3.200"/></svg>
<div class="t" style="left:1718px;top:1064px;font-size:28px;color:#1c1c1e">7</div>
<div class="t" style="left:1892px;top:1064px;font-size:28px;color:#1c1c1e;letter-spacing:.3px">Jerry</div>
<div class="t" style="left:2403px;top:1064px;font-size:28px;color:#1c1c1e">2091</div>
<svg style="left:2584px;top:1056px" width="44" height="44" viewBox="0 0 24 24" fill="none" stroke="#5558f5" stroke-width="2.300" stroke-linecap="round" stroke-linejoin="round"><path d="M1.300 12C3.500 7 7.500 4.300 12 4.300S20.500 7 22.700 12C20.500 17 16.500 19.700 12 19.700S3.500 17 1.300 12z"/><circle cx="12" cy="12" r="3.200"/></svg>
<div class="t" style="left:1718px;top:1144px;font-size:28px;color:#1c1c1e">8</div>
<div class="t" style="left:1892px;top:1144px;font-size:28px;color:#1c1c1e;letter-spacing:.3px">Vlimb.mcooo</div>
<div class="t" style="left:2403px;top:1144px;font-size:28px;color:#1c1c1e">2091</div>
<svg style="left:2584px;top:1136px" width="44" height="44" viewBox="0 0 24 24" fill="none" stroke="#5558f5" stroke-width="2.300" stroke-linecap="round" stroke-linejoin="round"><path d="M1.300 12C3.500 7 7.500 4.300 12 4.300S20.500 7 22.700 12C20.500 17 16.500 19.700 12 19.700S3.500 17 1.300 12z"/><circle cx="12" cy="12" r="3.200"/></svg>
<div class="t" style="left:1718px;top:1224px;font-size:28px;color:#1c1c1e">9</div>
<div class="t" style="left:1892px;top:1224px;font-size:28px;color:#1c1c1e;letter-spacing:.3px">Sky</div>
<div class="t" style="left:2403px;top:1224px;font-size:28px;color:#1c1c1e">2062</div>
<svg style="left:2584px;top:1216px" width="44" height="44" viewBox="0 0 24 24" fill="none" stroke="#5558f5" stroke-width="2.300" stroke-linecap="round" stroke-linejoin="round"><path d="M1.300 12C3.500 7 7.500 4.300 12 4.300S20.500 7 22.700 12C20.500 17 16.500 19.700 12 19.700S3.500 17 1.300 12z"/><circle cx="12" cy="12" r="3.200"/></svg>
</div>
</body>
</html>
